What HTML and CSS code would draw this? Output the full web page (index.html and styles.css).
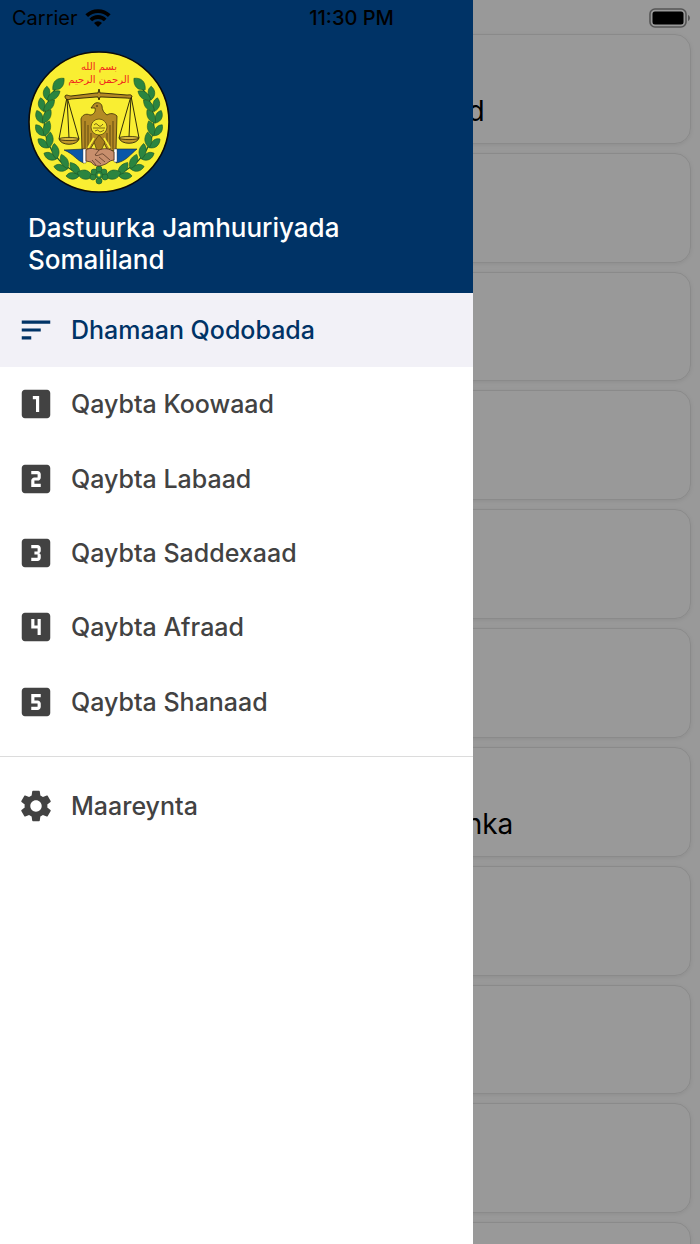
FILE: index.html
```
<!DOCTYPE html>
<html lang="so">
<head>
  <meta charset="utf-8">
  <meta name="viewport" content="width=device-width, initial-scale=1">
  <title>Dastuurka Jamhuuriyada Somaliland</title>
  <link rel="stylesheet" href="styles.css">
</head>
<body>
  <div class="app">
    <header class="status-bar">
      <div class="carrier">
        <span>Carrier</span>
        <svg class="wifi" viewBox="0 0 26 20" aria-hidden="true">
          <path d="M1.7 7.7a16 16 0 0 1 22.6 0M5.8 12a10.2 10.2 0 0 1 14.4 0" fill="none" stroke="#000" stroke-width="3.8"/>
          <path d="M13 19l-4-4a5.7 5.7 0 0 1 8 0z"/>
        </svg>
      </div>
      <div class="clock">11:30 PM</div>
      <svg class="battery" viewBox="0 0 42 20" aria-hidden="true">
        <rect x="1" y="1" width="36" height="18" rx="5" fill="none" stroke="#555" stroke-width="1.6"/>
        <rect x="3.5" y="3.5" width="31" height="13" rx="2.5"/>
        <path d="M39 7c2.6 1 2.6 5 0 6z" fill="#555"/>
      </svg>
    </header>

    <main class="cards">
      <article class="card">Magaca Jamhuriyad</article>
      <article class="card"></article>
      <article class="card"></article>
      <article class="card"></article>
      <article class="card"></article>
      <article class="card"></article>
      <article class="card">Xuquuqaha Muwaadinka</article>
      <article class="card"></article>
      <article class="card"></article>
      <article class="card"></article>
      <article class="card"></article>
    </main>

    <div class="backdrop"></div>

    <aside class="drawer">
      <div class="drawer-header">
        <svg class="emblem" viewBox="0 0 142 142" role="img" aria-label="Astaanta Somaliland">
          <defs>
            <path id="leaf" d="M0 6C-6 0-5-6 1-10C7-4 6 2 0 6z"/>
            <g id="pair">
              <path d="M0 6C-7 5-9-1-7-6C-2-5 0-2 0 6z"/>
              <path d="M0 6C-2-2 2-7 7-8C9-1 6 4 0 6z"/>
            </g>
            <g id="branch" fill="#2b8540" stroke="#1b5a2a" stroke-width=".6">
              <path d="M29 36A55 55 0 0 0 65 126" fill="none" stroke-width="1.2"/>
              <use href="#leaf" transform="rotate(41 71 71) translate(15 71)"/>
              <use href="#pair" transform="rotate(29 71 71) translate(15 71)"/>
              <use href="#pair" transform="rotate(17 71 71) translate(15 71)"/>
              <use href="#pair" transform="rotate(5 71 71) translate(15 71)"/>
              <use href="#pair" transform="rotate(-8 71 71) translate(15 71)"/>
              <use href="#pair" transform="rotate(-21 71 71) translate(15 71)"/>
              <use href="#pair" transform="rotate(-35 71 71) translate(15 71)"/>
              <use href="#pair" transform="rotate(-50 71 71) translate(15 71)"/>
              <use href="#pair" transform="rotate(-64 71 71) translate(15 71)"/>
              <use href="#leaf" transform="rotate(-77 71 71) translate(16 71)"/>
            </g>
            <g id="scale">
              <path d="M39 46L31 88M39 46L41 87M39 46L51 88" fill="none" stroke="#1a1605" stroke-width=".9"/>
              <path d="M31 88C33 95 49 95 51 88z" fill="#c19a2b" stroke="#1a1605" stroke-width=".8"/>
              <ellipse cx="41" cy="88" rx="10" ry="1.6" fill="#d8b640" stroke="#1a1605" stroke-width=".7"/>
            </g>
          </defs>
          <circle cx="71" cy="71" r="70" fill="#f9ee32" stroke="#0b0b0b" stroke-width="1.6"/>
          <use href="#branch"/>
          <use href="#branch" transform="translate(142 0) scale(-1 1)"/>
          <!-- flower -->
          <g fill="#2b8540" stroke="#1b5a2a" stroke-width=".6">
            <circle cx="71" cy="118" r="3"/>
            <circle cx="76" cy="121" r="3"/>
            <circle cx="77" cy="126" r="3"/>
            <circle cx="71" cy="130" r="3"/>
            <circle cx="65" cy="126" r="3"/>
            <circle cx="66" cy="121" r="3"/>
            <circle cx="71" cy="124" r="3.5"/>
          </g>
          <circle cx="71" cy="124" r="1.5" fill="#f9ee32"/>
          <text class="emblem-text" x="71" y="19">بسم الله</text>
          <text class="emblem-text" x="71" y="32">الرحمن الرحيم</text>

          <!-- eagle -->
          <path d="M63 57L66 53C68 51 73 51 74 55C74 59 76 62 79 64C82 62 86 62 89 65L88 99L80 100L76 92L71 86L66 92L61 100L54 99L53 68C54 64 58 62 62 64C66 64 68 60 67 57z" fill="#b48a25" stroke="#3b2d08" stroke-width=".8"/>
          <path d="M57 70V98M60 74V98M63 82V94M85 70V98M82 74V98M79 82V94" stroke="#4d3a0c" stroke-width=".8"/>
          <path d="M66 91L71 84L77 91L73 100H69z" fill="#a57c1e" stroke="#3b2d08" stroke-width=".6"/>
          <path d="M66 87L60 97M76 87L82 97" stroke="#f9ee32" stroke-width="1.8"/>
          <circle cx="69" cy="55" r=".7"/>
          <circle cx="71" cy="76" r="8" fill="#f4e52e" stroke="#5a4610" stroke-width=".8"/>
          <path d="M66 74q2-3 4 0t5-1M65 77h12M67 80q3-2 4 0t5-1" fill="none" stroke="#6b5713" stroke-width=".9"/>

          <!-- balance -->
          <use href="#scale"/>
          <use href="#scale" transform="translate(142 -1) scale(-1 1)"/>
          <path d="M37 45C38 43 41 45 43 45L68 42L70 42L71 38L72 42L74 42L99 44C101 44 104 43 104 46C103 48 100 47 98 47L74 46L72 46L71 49L70 46L68 46L43 48C40 49 37 49 37 45z" fill="#b48a25" stroke="#2b2106" stroke-width=".9"/>

          <!-- handshake -->
          <path d="M36 99L56 98V112C49 110 46 103 36 99z" fill="#0a57a8" stroke="#112233" stroke-width=".6"/>
          <path d="M109 98L88 98V112C97 111 103 103 109 98z" fill="#0a57a8" stroke="#112233" stroke-width=".6"/>
          <path d="M55 98h3v14h-3zM86 98h3v13h-3z" fill="#fff" stroke="#333" stroke-width=".4"/>
          <path d="M58 99C62 96 67 98 71 99C76 97 81 97 86 101V109C81 109 80 113 75 114C70 116 66 115 63 111L58 110z" fill="#c88f6d" stroke="#4c2e1d" stroke-width=".8"/>
          <path d="M71 99L67 104C70 106 73 102 75 103L82 109M71 106L77 111M67 108L73 113M64 109L68 114" fill="none" stroke="#4c2e1d" stroke-width=".7"/>
        </svg>
        <h1>Dastuurka Jamhuuriyada Somaliland</h1>
      </div>

      <nav>
        <div class="nav-list">
          <a class="nav-item active" href="#dhamaan">
            <svg class="icon" viewBox="0 0 24 24" aria-hidden="true"><path d="M3 18h6v-2H3v2zM3 6v2h18V6H3zm0 7h12v-2H3v2z"/></svg>
            <span>Dhamaan Qodobada</span>
          </a>
          <a class="nav-item" href="#qaybta-1">
            <svg class="icon" viewBox="0 0 24 24" aria-hidden="true"><path d="M19 3H5c-1.1 0-2 .9-2 2v14c0 1.1.9 2 2 2h14c1.1 0 2-.9 2-2V5c0-1.1-.9-2-2-2zm-5 14h-2V9h-2V7h4v10z"/></svg>
            <span>Qaybta Koowaad</span>
          </a>
          <a class="nav-item" href="#qaybta-2">
            <svg class="icon" viewBox="0 0 24 24" aria-hidden="true"><path d="M19 3H5c-1.1 0-2 .9-2 2v14c0 1.1.9 2 2 2h14c1.1 0 2-.9 2-2V5c0-1.1-.9-2-2-2zm-4 8c0 1.11-.9 2-2 2h-2v2h4v2H9v-4c0-1.11.9-2 2-2h2V9H9V7h4c1.1 0 2 .89 2 2v2z"/></svg>
            <span>Qaybta Labaad</span>
          </a>
          <a class="nav-item" href="#qaybta-3">
            <svg class="icon" viewBox="0 0 24 24" aria-hidden="true"><path d="M19 3H5c-1.1 0-2 .9-2 2v14c0 1.1.9 2 2 2h14c1.1 0 2-.9 2-2V5c0-1.1-.9-2-2-2zm-4 7.5c0 .83-.67 1.5-1.5 1.5.83 0 1.5.67 1.5 1.5V15c0 1.11-.9 2-2 2H9v-2h4v-2h-2v-2h2V9H9V7h4c1.1 0 2 .89 2 2v1.5z"/></svg>
            <span>Qaybta Saddexaad</span>
          </a>
          <a class="nav-item" href="#qaybta-4">
            <svg class="icon" viewBox="0 0 24 24" aria-hidden="true"><path d="M19 3H5c-1.1 0-2 .9-2 2v14c0 1.1.9 2 2 2h14c1.1 0 2-.9 2-2V5c0-1.1-.9-2-2-2zm-4 14h-2v-4H9V7h2v4h2V7h2v10z"/></svg>
            <span>Qaybta Afraad</span>
          </a>
          <a class="nav-item" href="#qaybta-5">
            <svg class="icon" viewBox="0 0 24 24" aria-hidden="true"><path d="M19 3H5c-1.1 0-2 .9-2 2v14c0 1.1.9 2 2 2h14c1.1 0 2-.9 2-2V5c0-1.1-.9-2-2-2zm-4 6h-4v2h2c1.1 0 2 .89 2 2v2c0 1.11-.9 2-2 2H9v-2h4v-2H9V7h6v2z"/></svg>
            <span>Qaybta Shanaad</span>
          </a>
        </div>

        <div class="nav-footer">
          <a class="nav-item" href="#maareynta">
            <svg class="icon" viewBox="0 0 24 24" aria-hidden="true"><path d="M19.14 12.94c.04-.3.06-.61.06-.94 0-.32-.02-.64-.07-.94l2.03-1.58c.18-.14.23-.41.12-.61l-1.92-3.32c-.12-.22-.37-.29-.59-.22l-2.39.96c-.5-.38-1.03-.7-1.62-.94l-.36-2.54c-.04-.24-.24-.41-.48-.41h-3.84c-.24 0-.43.17-.47.41l-.36 2.54c-.59.24-1.13.57-1.62.94l-2.39-.96c-.22-.08-.47 0-.59.22L2.74 8.87c-.12.21-.08.47.12.61l2.03 1.58c-.05.3-.09.63-.09.94s.02.64.07.94l-2.03 1.58c-.18.14-.23.41-.12.61l1.92 3.32c.12.22.37.29.59.22l2.39-.96c.5.38 1.03.7 1.62.94l.36 2.54c.05.24.24.41.48.41h3.84c.24 0 .44-.17.47-.41l.36-2.54c.59-.24 1.13-.56 1.62-.94l2.39.96c.22.08.47 0 .59-.22l1.92-3.32c.12-.22.07-.47-.12-.61l-2.01-1.58zM12 15.6c-1.98 0-3.6-1.62-3.6-3.6s1.62-3.6 3.6-3.6 3.6 1.62 3.6 3.6-1.62 3.6-3.6 3.6z"/></svg>
            <span>Maareynta</span>
          </a>
        </div>
      </nav>
    </aside>
  </div>
</body>
</html>
```
FILE: styles.css
```
* {
  box-sizing: border-box;
}

body {
  margin: 0;
  font-family: Inter, "Liberation Sans", sans-serif;
  color: #000;
}

.app {
  position: relative;
  height: 100vh;
  overflow: hidden;
  background-color: #fff;
}

/* Status bar */
.status-bar {
  position: absolute;
  top: 0;
  left: 0;
  right: 0;
  z-index: 3;
  display: grid;
  grid-template-columns: 1fr auto 1fr;
  align-items: center;
  height: 35px;
  padding: 0 9px 0 12px;
  font-size: 20px;
}

.carrier {
  display: flex;
  align-items: center;
  gap: 7px;
}

.wifi {
  width: 26px;
  height: 20px;
}

.clock {
  font-weight: 500;
}

.battery {
  justify-self: end;
  width: 42px;
  height: 20px;
}

/* Cards */
.cards {
  display: grid;
  grid-auto-rows: 1fr;
  gap: 9px;
  height: 1332px;
  padding: 34px 9px 0;
}

.card {
  padding: 59px 20px 0;
  border: 1px solid #e6e6e6;
  border-radius: 16px;
  box-shadow: 0 1px 4px rgba(0, 0, 0, 0.08);
  font-size: 28px;
  line-height: 34px;
  text-align: center;
}

.backdrop {
  position: absolute;
  top: 0;
  right: 0;
  bottom: 0;
  left: 0;
  z-index: 1;
  background-color: rgba(0, 0, 0, 0.4);
}

/* Drawer */
.drawer {
  position: absolute;
  top: 0;
  bottom: 0;
  left: 0;
  z-index: 2;
  width: 67.6%;
  background-color: #fff;
}

.drawer-header {
  padding: 51px 28px 17px;
  background-color: #003366;
  color: #fff;
}

.emblem {
  display: block;
  width: 142px;
  height: 142px;
}

.emblem-text {
  fill: #f0281c;
  font-family: "DejaVu Sans", sans-serif;
  font-size: 10px;
  text-anchor: middle;
}

.drawer-header h1 {
  margin: 19px 0 0;
  font-size: 26px;
  font-weight: 500;
  line-height: 32px;
}

.nav-list {
  display: grid;
  grid-auto-rows: 1fr;
  height: 446px;
}

.nav-item {
  display: flex;
  align-items: center;
  gap: 16px;
  min-height: 74px;
  padding: 0 17px;
  color: #424242;
  font-size: 25px;
  font-weight: 500;
  text-decoration: none;
}

.nav-item.active {
  background-color: #f2f1f7;
  color: #003366;
}

.icon {
  width: 38px;
  height: 38px;
  fill: currentColor;
}

.nav-footer {
  margin-top: 17px;
  padding-top: 12px;
  border-top: 1px solid #dcdcdc;
}
```
